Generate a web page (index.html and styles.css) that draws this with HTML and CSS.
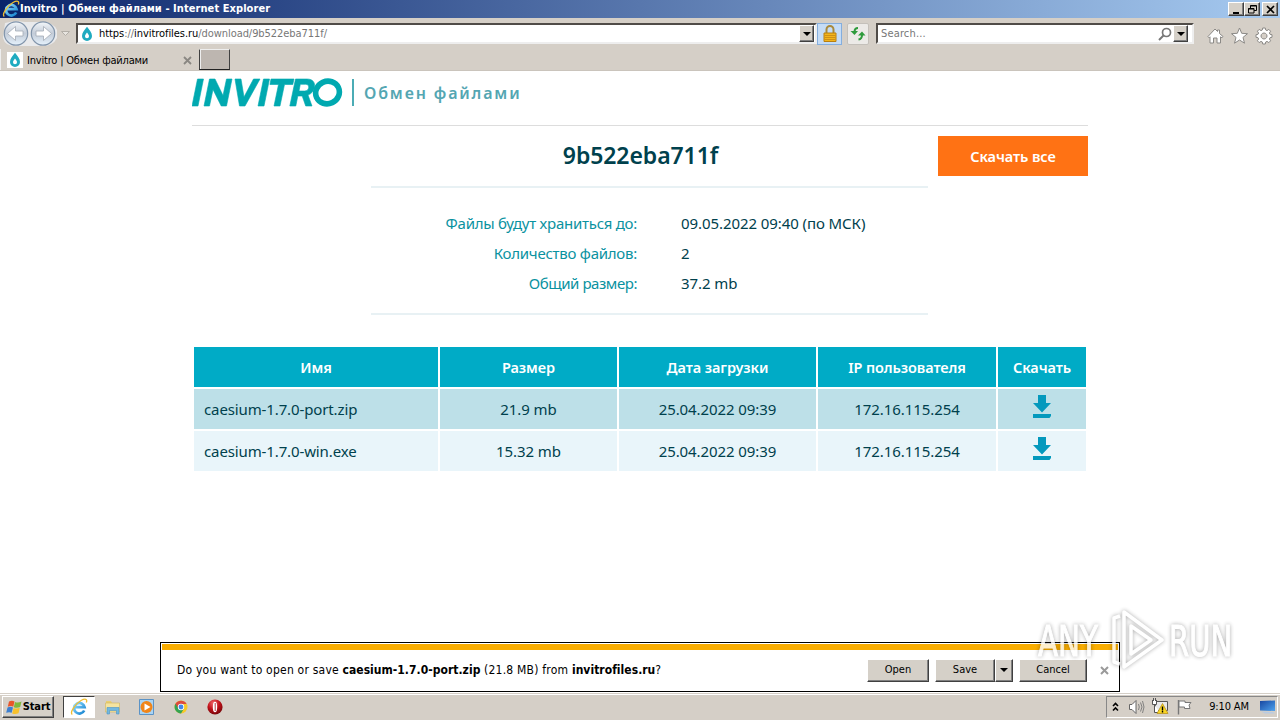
FILE: index.html
```html
<!DOCTYPE html>
<html lang="ru">
<head>
<meta charset="utf-8">
<title>Invitro | Обмен файлами</title>
<link rel="stylesheet" href="styles.css">
</head>
<body>
<svg class="defs" width="0" height="0">
  <defs>
    <linearGradient id="glass" x1="0" y1="0" x2="0" y2="1"><stop offset="0" stop-color="#f4f7fa"/><stop offset=".5" stop-color="#c3ccd8"/><stop offset="1" stop-color="#e6f2fc"/></linearGradient>
    <linearGradient id="ieblue" x1="0" y1="0" x2="1" y2="1"><stop offset="0" stop-color="#8fdcff"/><stop offset="1" stop-color="#1583d0"/></linearGradient>
    <linearGradient id="monitor" x1="0" y1="0" x2="1" y2="1"><stop offset="0" stop-color="#1746a0"/><stop offset="1" stop-color="#4fa3ee"/></linearGradient>
    <radialGradient id="ored" cx=".4" cy=".25" r=".8"><stop offset="0" stop-color="#f0686a"/><stop offset=".5" stop-color="#c01018"/><stop offset="1" stop-color="#6e0508"/></radialGradient>
    <symbol id="ie" viewBox="0 0 18 18">
      <path d="M14.200 12.500A5.300 5.300 0 1 1 14.600 9.200H5.500" fill="none" stroke="url(#ieblue)" stroke-width="2.700"/>
      <path d="M2.300 16.500C-.5 14.500 5 6 11 2.500 15 .3 17.800.8 16.300 4.600" fill="none" stroke="#efbd31" stroke-width="1.300"/>
    </symbol>
    <symbol id="drop" viewBox="0 0 16 16">
      <path d="M8 .8C10.300 4 13 6.700 13 9.900a5 5 0 0 1-10 0C3 6.700 5.700 4 8 .8Z" fill="#1fabc0"/>
      <path d="M8 6.500c1 1.400 2 2.400 2 3.700a2 2 0 0 1-4 0C6 8.900 7 7.900 8 6.500Z" fill="#fff"/>
    </symbol>
    <symbol id="download" viewBox="0 0 20 24">
      <path d="M6 0h8v8h5l-9 9.500L1 8h5ZM1 19h18v2l-1.500 2H1Z" fill="#0499bd"/>
    </symbol>
  </defs>
</svg>
<div class="screen">
  <header class="titlebar">
    <svg class="title-ie" width="18" height="18"><use href="#ie"/></svg>
    <span class="title">Invitro | Обмен файлами - Internet Explorer</span>
    <div class="winbtns">
      <span class="btn3d"><svg width="13" height="11"><path d="M3 8h6v2H3Z"/></svg></span>
      <span class="btn3d"><svg width="13" height="11"><path d="M4.500 4V1.500h6v5H8M4.500 2h6M2.500 4.500h5.500v4.500H2.500ZM2 5h6" fill="none" stroke="#000"/></svg></span>
      <span class="btn3d close"><svg width="13" height="11"><path d="M3 2l7 7M10 2l-7 7" stroke="#000" stroke-width="1.700"/></svg></span>
    </div>
  </header>

  <nav class="navbar">
    <svg class="arrows" width="72" height="27" viewBox="0 0 72 27">
      <path d="M4 3Q14 0 24 2h14q14-1 18 8v8q-4 8-14 8H14Q4 26 2 18Z" fill="#e9eaec"/>
      <g stroke="#8295ab" stroke-width="1.200" fill="url(#glass)"><circle cx="15" cy="13.500" r="11.700"/><circle cx="42" cy="13.500" r="11.700"/></g>
      <g fill="#fff" stroke="#a3abb5" stroke-width=".8"><path d="M6.500 13.500l8-7v4.500h7.500v5h-7.500v4.500Z"/><path d="M50.500 13.500l-8-7v4.500H35v5h7.500v4.500Z"/></g>
      <path d="M60.500 11.500h8l-4 4Z" fill="#e8e5e0" stroke="#b3afa8"/>
    </svg>
    <div class="field address">
      <svg width="16" height="16"><use href="#drop"/></svg>
      <span class="url"><span class="host">https</span>://<span class="host">invitrofiles.ru</span>/download/9b522eba711f/</span>
      <span class="btn3d pick"><i class="caret"></i></span>
    </div>
    <span class="tool lock"><svg width="16" height="18"><path d="M4.500 8V4.500a3.500 3.500 0 0 1 7 0V8" fill="none" stroke="#a98a3c" stroke-width="2"/><path d="M2 8h12v8.500H2Z" fill="#f3b51c" stroke="#b87f10"/><path d="M2.500 10.500h11M2.500 12.500h11M2.500 14.500h11" stroke="#cf9016"/></svg></span>
    <span class="tool refresh"><svg width="18" height="18"><path d="M9 3Q5.500 3 5.500 7" fill="none" stroke="#2e9b3c" stroke-width="2"/><path d="M1.500 6h7.500L5.500 10ZM9 10.500h7.500L13 6.500Z" fill="#2e9b3c"/><path d="M13 10q0 4-3.500 4.500" fill="none" stroke="#2e9b3c" stroke-width="2"/></svg></span>
    <div class="field search">
      <span class="hint">Search...</span>
      <svg width="14" height="14"><circle cx="8.500" cy="5.500" r="4" fill="none" stroke="#777" stroke-width="1.700"/><path d="M5.500 8.500L1 13" stroke="#777" stroke-width="2"/></svg>
      <span class="btn3d pick"><i class="caret"></i></span>
    </div>
    <svg class="cmd" width="66" height="18" fill="#fff" stroke="#8b8986" stroke-width="1">
      <path d="M1 9.500L8 2l2.500 2.500V3h2v3.500L16 9.500l-1 1.300-1.500-1V16H10v-5H6.500v5H3V9.800l-1 1Z"/>
      <path d="M32.500 1l2.200 5.300 5.800.4-4.500 3.700 1.500 5.800-5-3.200-5 3.200 1.500-5.800L24.500 6.700l5.800-.4Z"/>
      <path fill-rule="evenodd" d="M55.700 1h2.600l.4 2 1.300.6 1.800-1.200 1.800 1.800-1.200 1.800.6 1.300 2 .4v2.600l-2 .4-.6 1.300 1.200 1.800-1.800 1.800-1.800-1.200-1.300.6-.4 2h-2.600l-.4-2-1.300-.6-1.800 1.200-1.800-1.800 1.200-1.800-.6-1.300-2-.4V7.700l2-.4.6-1.300-1.200-1.800 1.800-1.800L54 3.600l1.300-.6ZM57 6a3 3 0 1 0 .01 0Z"/>
    </svg>
  </nav>

  <div class="tabs">
    <div class="tab">
      <span class="fav"><svg width="16" height="16"><use href="#drop"/></svg></span>
      <span class="tabname">Invitro | Обмен файлами</span>
      <svg width="9" height="9"><path d="M1 1l7 7M8 1L1 8" stroke="#8a8782" stroke-width="1.800"/></svg>
    </div>
    <span class="newtab"></span>
  </div>

  <main class="page">
    <div class="content">
      <div class="brand">
        <svg class="logo" width="152" height="29" viewBox="0 0 152 29"><g fill="#00a9b0" stroke="#00a9b0" stroke-width=".6">
          <path d="M5.500 1h6L6 28H0Z"/>
          <path d="M17.500 1h5.500l8 16.500L34.500 1H40l-5.500 27h-5.300L21 11.500 17.500 28H12Z"/>
          <path d="M43 1h6l3 18L61.500 1H68L53 28h-5.500Z"/>
          <path d="M71.500 1h6L72 28h-6Z"/>
          <path d="M79 1h23l-1.200 5.500h-8.300L88 28h-6l4.500-21.500h-8.600Z"/>
          <path fill-rule="evenodd" d="M103.500 1h11.500c5.500 0 8.300 3.300 7.500 8-.6 4-3 6.800-6.500 8l4 11h-6.300l-3.500-10h-4.400l-2 10h-6Zm4.800 5.300L107 13h5.500c2.400 0 4-1.400 4.200-3.600.2-2-1-3.100-3-3.100Z"/></g>
          <ellipse cx="135.500" cy="14.500" rx="12" ry="11.200" transform="rotate(-25 135.500 14.500)" fill="none" stroke="#00a9b0" stroke-width="5.600"/></svg>
        <span class="slogan">Обмен файлами</span>
      </div>
      <section class="summary">
        <div class="info">
          <h1>9b522eba711f</h1>
          <dl>
            <dt>Файлы будут храниться до:</dt><dd>09.05.2022 09:40 (по МСК)</dd>
            <dt>Количество файлов:</dt><dd>2</dd>
            <dt class="tight">Общий размер:</dt><dd>37.2 mb</dd>
          </dl>
        </div>
        <a class="all">Скачать все</a>
      </section>
      <div class="grid">
        <div class="th">Имя</div><div class="th">Размер</div><div class="th">Дата загрузки</div><div class="th">IP пользователя</div><div class="th">Скачать</div>
        <div class="td name">caesium-1.7.0-port.zip</div><div class="td">21.9 mb</div><div class="td">25.04.2022 09:39</div><div class="td">172.16.115.254</div><div class="td icon"><svg width="20" height="24"><use href="#download"/></svg></div>
        <div class="td alt name">caesium-1.7.0-win.exe</div><div class="td alt">15.32 mb</div><div class="td alt">25.04.2022 09:39</div><div class="td alt">172.16.115.254</div><div class="td alt icon"><svg width="20" height="24"><use href="#download"/></svg></div>
      </div>
    </div>
    <div class="notice">
      <div class="stripe"></div>
      <div class="noticebody">
        <span class="ask">Do you want to open or save <b>caesium-1.7.0-port.zip</b> (21.8 MB) from <b>invitrofiles.ru</b>?</span>
        <span class="btn3d push">Open</span>
        <span class="split"><span class="btn3d push save">Save</span><span class="btn3d more"><i class="caret"></i></span></span>
        <span class="btn3d push cancel">Cancel</span>
        <svg width="9" height="9"><path d="M1 1l7 7M8 1L1 8" stroke="#9a9a9a" stroke-width="2"/></svg>
      </div>
    </div>
    <div class="watermark">
      <span class="any">ANY</span>
      <svg width="56" height="66" viewBox="0 0 56 66" fill="none" stroke-linejoin="round"><g stroke="#fff" stroke-width="3.500"><path d="M11 8L5 10v44l6 2"/><path d="M15 4v55l38-27Z"/><path d="M22 18v28l20-14Z"/></g></svg>
      <span class="run">RUN</span>
    </div>
  </main>

  <footer class="taskbar">
    <span class="btn3d start">
      <svg width="17" height="16"><path d="M3 2.500q3-1.500 5.500 0L7.300 7.800q-2.500-1.500-5.500 0Z" fill="#e9562a"/><path d="M9 3q3 1.300 6.500-.5L14.200 8q-3 1.500-6.400.3Z" fill="#7fb93c"/><path d="M1.500 8.500q3-1.500 5.500 0l-1.300 5.300q-2.500-1.300-5.500 0Z" fill="#3d7fd0"/><path d="M7.600 9q3 1.200 6.200-.3l-1.300 5.500q-3 1.500-6.300.2Z" fill="#f7c02c"/></svg>
      Start</span>
    <span class="task active"><svg width="18" height="18"><use href="#ie"/></svg></span>
    <span class="task"><svg width="18" height="18"><path d="M2 3h5l1 2h7v3H2Z" fill="#e9cf72"/><path d="M1.500 5h14v9h-14Z" fill="#f5e4a0" stroke="#d0b45c" stroke-width=".6"/><path d="M3 16V9.500h12V16h-2.500v-3.500h-7V16Z" fill="#72b8e0" stroke="#4b94c4" stroke-width=".6"/></svg></span>
    <span class="task"><svg width="18" height="18"><path d="M1.500 1.500h14v15h-14Z" fill="#a9d4f4" stroke="#5b93c6"/><circle cx="8.500" cy="9" r="6" fill="#f08519"/><path d="M6.500 5.500v7l6-3.500Z" fill="#fff"/></svg></span>
    <span class="task"><svg width="18" height="18" viewBox="0 0 18 18"><circle cx="9" cy="9" r="6.500" fill="#f7c928"/><path d="M9 9L3.400 5.800A6.500 6.500 0 0 0 9 15.500L12 10.500Z" fill="#34a353"/><path d="M3.400 5.800L6.500 10.500 9 6h5.600A6.500 6.500 0 0 0 3.400 5.800Z" fill="#dd4b3e"/><circle cx="9" cy="9" r="3.200" fill="#fff"/><circle cx="9" cy="9" r="2.400" fill="#4286e8"/></svg></span>
    <span class="task"><svg width="18" height="18"><circle cx="9" cy="9" r="7.600" fill="url(#ored)"/><ellipse cx="9" cy="9" rx="2.200" ry="5.300" fill="#fff"/><path d="M9.200 5v8" stroke="#a01018" stroke-width=".8"/></svg></span>
    <div class="tray">
      <svg class="chevron" width="9" height="12"><path d="M2 5l2.500-2.500L7 5M2 9.500L4.500 7 7 9.500" fill="none" stroke="#000" stroke-width="1.600"/></svg>
      <svg class="speaker" width="17" height="16"><path d="M1.500 5.500H4l4-4v13l-4-4H1.500Z" fill="#fff" stroke="#666"/><path d="M10.500 5q1.500 3 0 6M12.500 3.500q3 4.500 0 9M14.500 2q3 6 0 12" fill="none" stroke="#777" stroke-width=".9"/></svg>
      <svg class="net" width="18" height="17"><path d="M4.500 3.500h12v9h-12Z" fill="#e9e9e9" stroke="#555"/><path d="M1.500 2v4.500h4V2M2.500 0v3M4.500 0v3M3.500 6.500v8h5" fill="#fff" stroke="#555"/><path d="M11.500 5.500L17 15.500H6Z" fill="#f8d523" stroke="#b48b10" stroke-width=".7"/><path d="M11.500 8.500v4M11.500 13v1.500" stroke="#000" stroke-width="1.400"/></svg>
      <svg class="flag" width="17" height="16"><path d="M2.500 1v14.500" stroke="#777" stroke-width="1.400"/><path d="M3 2h6v1.500h6L13 6l1 3.500H8.500V8H3Z" fill="#fff" stroke="#777"/></svg>
      <span class="clock">9:10 AM</span>
      <svg width="17" height="15"><path d="M1 2l15-.5V12L1 11.500Z" fill="url(#monitor)"/><path d="M2 12.500l12 .5 2 1.500H6Z" fill="#b9cbe2"/></svg>
    </div>
  </footer>
</div>
</body>
</html>
```
FILE: styles.css
```css
* { box-sizing: border-box; }
body { margin: 0; font: 11px/14px "DejaVu Sans Condensed", "DejaVu Sans", sans-serif; font-stretch: condensed; color: #000; white-space: nowrap; }
svg { display: block; flex: none; }
.defs { position: absolute; }
.screen { width: 1280px; height: 720px; display: flex; flex-direction: column; background: #fff; overflow: hidden; }

.titlebar { height: 18px; display: flex; align-items: center; padding: 0 2px; background: linear-gradient(90deg, #0a246a, #a6caf0); color: #fff; font-weight: bold; letter-spacing: .07px; }
.title { flex: 1; }
.winbtns { display: flex; }
.btn3d { display: flex; align-items: center; justify-content: center; background: #d5d0c8; border: 1px solid; border-color: #fff #404040 #404040 #fff; box-shadow: inset -1px -1px #808080; }
.winbtns .btn3d { width: 16px; height: 14px; }
.winbtns .close { margin-left: 2px; }

.navbar { height: 31px; display: flex; align-items: center; background: #d5cfc7; padding-left: 1px; }
.arrows { margin-top: -1px; }
.field { display: flex; align-items: center; height: 21px; background: #fff; border: 2px solid #504c48; border-right-color: #eee; border-bottom-color: #eee; color: #777; }
.address { width: 741px; margin-left: 3px; padding-left: 1px; }
.address .pick { margin-right: 1px; }
.url { margin-left: 4px; letter-spacing: -.06px; }
.host { color: #000; }
.pick { width: 15px; height: 17px; margin-left: auto; }
.caret { border: 4px solid transparent; border-top-color: #000; border-bottom: 0; }
.tool { width: 25px; height: 22px; display: flex; align-items: center; justify-content: center; }
.lock { background: #c5dcf6; border: 1px solid #84aede; }
.refresh { width: 22px; margin-left: 5px; background: #eceae7; border: 1px solid #c4c0ba; border-radius: 2px; }
.search { width: 318px; margin-left: 7px; padding: 0 4px 0 3px; letter-spacing: .15px; }
.search svg { margin-left: auto; }
.search .pick { margin-left: 1px; }
.cmd { margin: 4px 0 0 13px; }

.tabs { height: 22px; background: #d5cfc7; display: flex; border-bottom: 1px solid #cac4bc; }
.tab { display: flex; width: 199px; align-items: center; padding: 1px 7px 0 6px; border-left: 1px solid #eee; }
.fav { background: #fff; }
.tabname { margin-left: 4px; padding-top: 1px; flex: 1; letter-spacing: -.19px; }
.newtab { width: 31px; height: 21px; background: #bdb6b0; border: 1px solid; border-color: #eee #404040 #222 #404040; box-shadow: inset 1px 0 #eee; }

.page { position: relative; height: 622px; display: flex; justify-content: center; }
.content { width: 896px; font: 15px/30px "Noto Sans", sans-serif; color: #00414d; letter-spacing: -.08px; }
.brand { display: flex; align-items: flex-start; height: 55px; padding-top: 7px; border-bottom: 1px solid #ddd; }
.slogan { height: 27px; margin: 1px 0 0 8px; padding-left: 10px; border-left: 2px solid #4bacb5; font-size: 16px; line-height: 28px; font-weight: 600; letter-spacing: 1.850px; color: #54a6b2; }
.summary { display: flex; justify-content: flex-end; gap: 10px; padding-top: 10px; }
.info { width: 557px; }
h1 { height: 52px; margin: 0; padding-right: 18px; font-size: 23px; line-height: 39px; font-weight: 600; text-align: center; letter-spacing: -.08px; border-bottom: 2px solid #e8f1f4; }
dl { display: grid; grid-template-columns: 266px 1fr; column-gap: 44px; margin: 0; padding: 20px 0 15px; border-bottom: 2px solid #e8f1f4; }
dt { text-align: right; color: #0a929f; letter-spacing: -.25px; }
.tight { letter-spacing: -.45px; }
dd { margin: 0; }
.all { width: 150px; height: 40px; background: #ff7214; color: #fff; text-align: center; line-height: 40px; font-size: 14.500px; font-weight: 600; }
.grid { display: grid; grid-template-columns: 244px 177px 197px 178px 88px; grid-auto-rows: 40px; gap: 2px; margin: 32px 2px 0; }
.th, .td { display: flex; align-items: center; justify-content: center; }
.th { background: #00abc6; color: #fff; font-size: 14.500px; font-weight: 600; }
.td { background: #bde0e8; }
.alt { background: #e9f5fa; }
.name { justify-content: flex-start; padding-left: 10px; letter-spacing: -.12px; }
.icon { padding-bottom: 5px; }

.notice { position: absolute; left: 160px; top: 571px; width: 960px; height: 50px; padding: 1px; border: 1px solid #000; background: #fff; }
.stripe { height: 6px; background: #f9ad00; }
.noticebody { display: flex; align-items: center; height: 40px; padding: 0 9px 0 15px; }
.ask { flex: 1; font-size: 12px; letter-spacing: .22px; }
.ask b { letter-spacing: .03px; }
.push { width: 62px; height: 23px; }
.split { display: flex; margin: 0 6px; }
.save { width: 60px; }
.more { width: 18px; height: 23px; }
.cancel { width: 68px; margin-right: 13px; }

.watermark { position: absolute; left: 1038px; top: 537px; display: flex; align-items: center; color: #fff; font: 43px/66px "DejaVu Sans Condensed", sans-serif; -webkit-text-stroke: 1px #fff; filter: drop-shadow(0 0 2px rgba(0,0,0,.42)); opacity: .8; }
.any, .run { display: block; transform-origin: 0 50%; transform: scaleX(.76); }
.any { width: 71px; }
.run { width: 63px; margin-left: 4px; transform: scaleX(.75); }

.taskbar { height: 27px; display: flex; align-items: center; background: #d5cfc7; box-shadow: inset 0 1px #d5cfc7, inset 0 2px #fff; padding: 0 2px; }
.start { width: 52px; height: 22px; font-weight: bold; letter-spacing: -.1px; margin-right: 9px; }
.task { width: 32px; height: 22px; margin-right: 2px; display: flex; align-items: center; justify-content: center; }
.active { background: #fff; border: 1px solid; border-color: #404040 #fff #fff #404040; }
.tray { width: 172px; height: 22px; margin-left: auto; padding: 0 1px 0 4px; display: flex; align-items: center; border: 1px solid; border-color: #888 #fff #fff #888; }
.speaker { margin-left: 8px; }
.net { margin-left: 6px; }
.flag { margin-left: 7px; }
.clock { flex: 1; text-align: center; padding-left: 6px; letter-spacing: -.15px; }
```
